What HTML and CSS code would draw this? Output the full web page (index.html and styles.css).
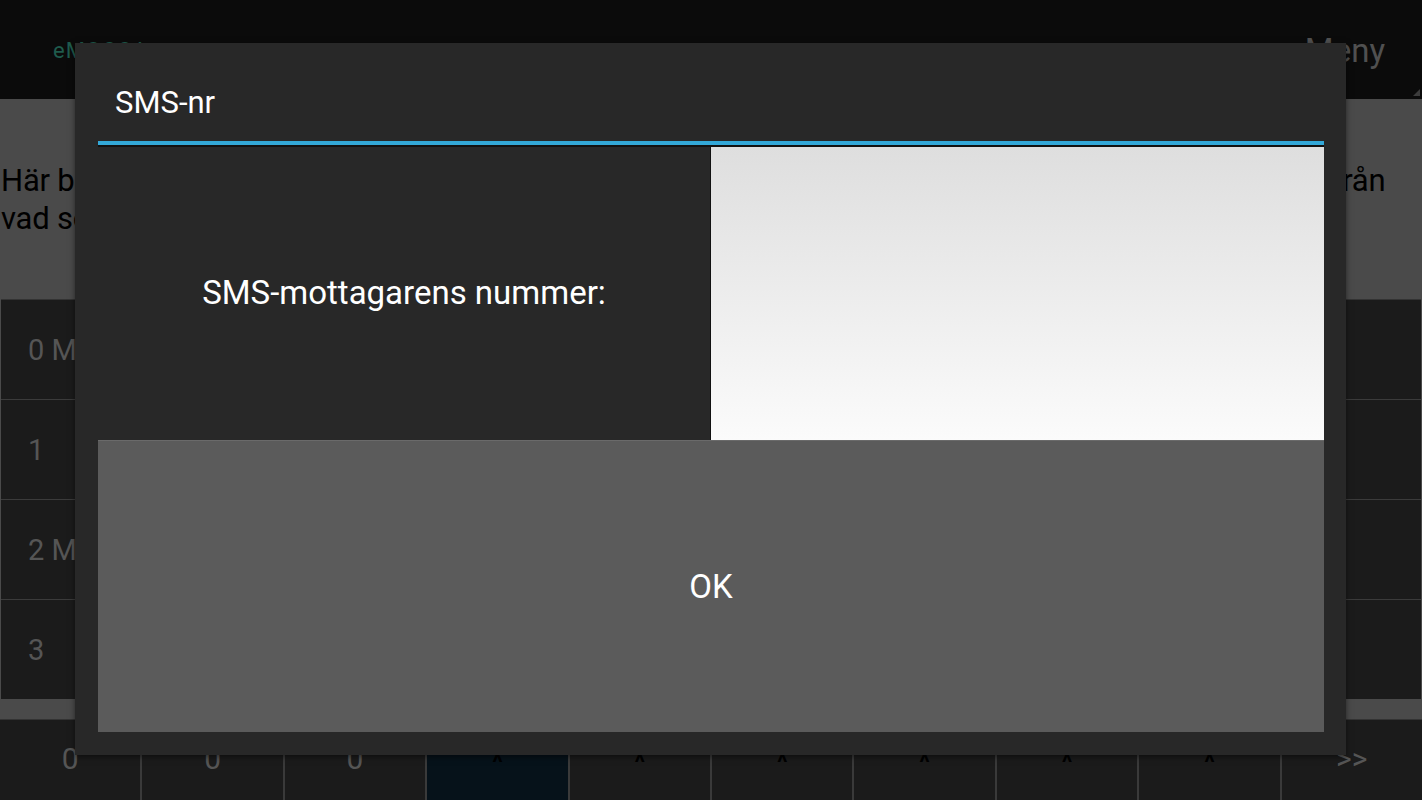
FILE: index.html
```html
<!DOCTYPE html>
<html>
<head>
    <title>SMS-nr</title>
    <link rel="stylesheet" href="styles.css">
</head>
<body>
    <div class="screen">
        <!-- toppen -->
        <div class="topbar">
            <span class="logo">eMOCCA</span>
            <span class="meny">Meny</span>
            <span class="corner"></span>
        </div>

        <div class="intro">
            <p>Här bestämmer du vilka som ska få SMS och vilken information de får, beroende på vilka tider och från<br>vad som händer</p>
        </div>

        <div class="rows">
            <div class="row">0 Mottagare</div>
            <div class="row">1</div>
            <div class="row">2 Mottagare</div>
            <div class="row">3</div>
        </div>

        <div class="keys">
            <div class="key">0</div>
            <div class="key">0</div>
            <div class="key">0</div>
            <div class="key key-active caret">^</div>
            <div class="key caret">^</div>
            <div class="key caret">^</div>
            <div class="key caret">^</div>
            <div class="key caret">^</div>
            <div class="key caret">^</div>
            <div class="key">&gt;&gt;</div>
        </div>

        <!-- dialog -->
        <div class="dialog">
            <div class="dialog-title">SMS-nr</div>
            <div class="dialog-line"></div>
            <div class="dialog-body">
                <div class="dialog-label">SMS-mottagarens nummer:</div>
                <div class="dialog-input"></div>
            </div>
            <button type="button" class="dialog-ok">OK</button>
        </div>
    </div>
</body>
</html>
```

FILE: styles.css
```css
body {
    margin: 0;
    background-color: #4a4a4a;
    font-family: Roboto, "Noto Sans", sans-serif;
}

.screen {
    position: relative;
    width: 1422px;
    height: 800px;
    overflow: hidden;
}

/* topbar */
.topbar {
    position: relative;
    height: 99px;
    background-color: #0b0b0b;
    display: flex;
    align-items: center;
    justify-content: space-between;
    padding: 0 37px 0 53px;
}

.logo {
    color: #1f5b4d;
    font-size: 22px;
    letter-spacing: 1px;
    margin-top: 2px;
}

.meny {
    color: #505050;
    font-size: 33px;
    margin-top: 2px;
}

.corner {
    position: absolute;
    right: 2px;
    bottom: 3px;
    width: 0;
    height: 0;
    border-left: 7px solid transparent;
    border-bottom: 7px solid #3c3c3c;
}

/* intro */
.intro {
    height: 200px;
    padding-left: 1px;
}

.intro p {
    margin: 0;
    padding-top: 63px;
    color: #000;
    font-size: 31px;
    line-height: 38px;
    letter-spacing: -0.2px;
    white-space: nowrap;
}

/* rader */
.rows {
    margin: 0 1px 0 1px;
    height: 399px;
    display: flex;
    flex-direction: column;
    gap: 1px;
    background-color: #3b3b3b;
    border-top: 1px solid #333;
}

.row {
    flex: 1;
    background-color: #1b1b1b;
    color: #555;
    font-size: 29px;
    display: flex;
    align-items: center;
    padding-left: 27px;
}

/* knapprad */
.keys {
    margin-top: 20px;
    height: 80px;
    display: grid;
    grid-template-columns: repeat(10, 1fr);
    gap: 2px;
    background-color: #3a3a3a;
    border-top: 1px solid #333;
}

.key {
    background-color: #1b1b1b;
    color: #555;
    font-size: 30px;
    display: flex;
    justify-content: center;
    align-items: center;
    padding-bottom: 4px;
}

.key.caret {
    color: #000;
    font-size: 24px;
    font-weight: bold;
    padding-bottom: 0;
    padding-top: 6px;
}

.key-active {
    background-color: #06121a;
}

/* dialog */
.dialog {
    position: absolute;
    left: 75px;
    top: 43px;
    width: 1271px;
    height: 712px;
    background-color: #282828;
    box-shadow: 0 2px 6px rgba(0, 0, 0, 0.5);
    padding: 0 22px 23px 23px;
    box-sizing: border-box;
    display: flex;
    flex-direction: column;
}

.dialog-title {
    height: 98px;
    display: flex;
    align-items: center;
    padding: 20px 0 0 17px;
    box-sizing: border-box;
    color: #fff;
    font-size: 31px;
}

.dialog-line {
    height: 4px;
    background-color: #33a8d8;
    border-bottom: 2px solid #111;
}

.dialog-body {
    height: 293px;
    display: flex;
}

.dialog-label {
    flex: 0 0 612px;
    display: flex;
    justify-content: center;
    align-items: center;
    color: #fff;
    font-size: 33px;
    padding-bottom: 2px;
    box-sizing: border-box;
}

.dialog-input {
    flex: 1;
    border-left: 1px solid #111;
    background: linear-gradient(#dedede, #fbfbfb);
}

.dialog-ok {
    flex: 1;
    border: none;
    border-top: 1px solid #6a6a6a;
    background-color: #5b5b5b;
    color: #fff;
    font-family: Roboto, "Noto Sans", sans-serif;
    font-size: 33px;
    padding: 0;
    cursor: pointer;
}
```
